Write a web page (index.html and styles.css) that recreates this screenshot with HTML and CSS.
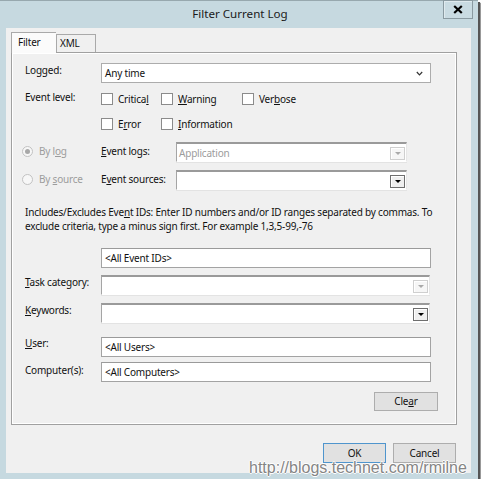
FILE: index.html
```html
<!DOCTYPE html>
<html>
<head>
<meta charset="utf-8">
<link rel="stylesheet" href="styles.css">
</head>
<body>
<div class="window">
  <div class="titlebar">
    <span class="title">Filter Current Log</span>
    <div class="close"><svg width="10" height="9" viewBox="0 0 10 9"><path d="M1.2 1L8.8 8M8.8 1L1.2 8" stroke="#000" stroke-width="2.2" fill="none"/></svg></div>
  </div>
  <div class="client">
    <div class="tabs">
      <div class="tab active">Filter</div>
      <div class="tab">XML</div>
    </div>
    <div class="panel">
      <div class="row r-logged">
        <span class="label">Logged:</span>
        <div class="select"><span class="val">Any time</span><svg class="chev" width="7" height="5" viewBox="0 0 7 5"><path d="M0.8 1L3.5 3.8L6.2 1" stroke="#333" stroke-width="1.2" fill="none"/></svg></div>
      </div>
      <div class="row r-level">
        <span class="label lift">Event level:</span>
        <div class="checks">
          <span class="check"><span class="box"></span><span>Critica<u>l</u></span></span>
          <span class="check"><span class="box"></span><span><u>W</u>arning</span></span>
          <span class="check"><span class="box"></span><span>Ver<u>b</u>ose</span></span>
          <span class="check"><span class="box"></span><span>E<u>r</u>ror</span></span>
          <span class="check"><span class="box"></span><span><u>I</u>nformation</span></span>
        </div>
      </div>
      <div class="row r-bylog">
        <span class="radio-opt"><span class="radio checked"></span><span>By l<u>o</u>g</span></span>
        <span class="label2"><u>E</u>vent logs:</span>
        <div class="combo short disabled"><span class="val">Application</span><span class="drop"><i></i></span></div>
      </div>
      <div class="row r-bysource">
        <span class="radio-opt"><span class="radio"></span><span>By <u>s</u>ource</span></span>
        <span class="label2">E<u>v</u>ent sources:</span>
        <div class="combo short"><span class="val"></span><span class="drop"><i></i></span></div>
      </div>
      <p class="info">Includes/Excludes Eve<u>n</u>t IDs: Enter ID numbers and/or ID ranges separated by commas. To<br>exclude criteria, type a minus sign first. For example 1,3,5-99,-76</p>
      <div class="row r-ids">
        <span class="label"></span>
        <div class="input">&lt;All Event IDs&gt;</div>
      </div>
      <div class="row r-task">
        <span class="label"><u>T</u>ask category:</span>
        <div class="combo long disabled"><span class="val"></span><span class="drop"><i></i></span></div>
      </div>
      <div class="row r-keywords">
        <span class="label"><u>K</u>eywords:</span>
        <div class="combo long"><span class="val"></span><span class="drop"><i></i></span></div>
      </div>
      <div class="row r-user">
        <span class="label"><u>U</u>ser:</span>
        <div class="input">&lt;All Users&gt;</div>
      </div>
      <div class="row r-computer">
        <span class="label">Computer(s):</span>
        <div class="input">&lt;All Computers&gt;</div>
      </div>
      <div class="btn clear">Cle<u>a</u>r</div>
    </div>
    <div class="buttons">
      <div class="btn default">OK</div>
      <div class="btn">Cancel</div>
    </div>
  </div>
</div>
<div class="watermark">http://blogs.technet.com/rmilne</div>
</body>
</html>
```

FILE: styles.css
```css
html, body {
  margin: 0;
  padding: 0;
  background: #ffffff;
}

body {
  font-family: "Noto Sans", "Open Sans", sans-serif;
  font-size: 10px;
  line-height: 14px;
  letter-spacing: -0.2px;
  color: #111;
}

u {
  text-decoration: underline;
  text-underline-offset: 1px;
}

.window {
  position: relative;
  width: 478px;
  height: 479px;
  box-sizing: border-box;
  background: #c6d9e0;
  border-top: 1px solid #97a8ae;
  box-shadow: 2px 2px 0 #555, 3px 3px 1px #999;
}

.titlebar {
  position: relative;
  height: 27px;
  text-align: center;
}

.title {
  display: inline-block;
  font-size: 11.6px;
  letter-spacing: 0;
  line-height: 26px;
  color: #1a1a1a;
  padding-left: 2px;
}

.close {
  position: absolute;
  top: -1px;
  right: 5px;
  width: 30px;
  height: 19px;
  box-sizing: border-box;
  border: 1px solid #8a9aa1;
  box-shadow: inset 1px 1px 0 #dfeaee;
  background: #c9dbe2;
  display: flex;
  align-items: center;
  justify-content: center;
}

.close svg {
  display: block;
}

.client {
  margin: 0 7px 0 6px;
  height: 445px;
  background: #f0f0f0;
  padding: 4px 0 0 5px;
  box-sizing: border-box;
  display: flex;
  flex-direction: column;
}

.tabs {
  display: flex;
  align-items: flex-end;
  height: 20px;
  position: relative;
  z-index: 1;
}

.tab {
  box-sizing: border-box;
  border: 1px solid #a9a9a9;
  border-bottom: none;
  background: #f0f0f0;
  height: 18px;
  line-height: 17px;
  padding-left: 3px;
}

.tab.active {
  width: 45px;
  height: 21px;
  margin-bottom: -1px;
  background: #fbfbfb;
  padding-left: 6px;
  line-height: 19px;
  border-right: none;
}

.tab:not(.active) {
  width: 40px;
  border-left: 1px solid #a9a9a9;
}

.panel {
  width: 446px;
  height: 373px;
  box-sizing: border-box;
  border: 1px solid #a0a0a0;
  box-shadow: inset 1px 1px 0 #ffffff, inset -1px -1px 0 #ffffff;
  padding: 10px 18px 0 13px;
  display: flex;
  flex-direction: column;
}

.row {
  display: flex;
  align-items: flex-start;
}

.label {
  width: 76px;
  flex: none;
  line-height: 14px;
}

.label.lift {
  margin-top: -2px;
}

.select {
  width: 330px;
  height: 20px;
  box-sizing: border-box;
  border: 1px solid #acacac;
  background: #fff;
  display: flex;
  align-items: center;
  justify-content: space-between;
  padding: 0 7px 0 3px;
}

.r-level {
  margin-top: 9px;
}

.checks {
  display: grid;
  grid-template-columns: 60px 81px auto;
  grid-auto-rows: 14px;
  row-gap: 11px;
}

.check {
  display: flex;
  align-items: center;
  gap: 5px;
  white-space: nowrap;
}

.box {
  width: 12px;
  height: 12px;
  box-sizing: border-box;
  border: 1px solid #8b8b8b;
  background: #fff;
  flex: none;
}

.r-bylog {
  margin-top: 11px;
}

.r-bysource {
  margin-top: 8px;
}

.radio-opt {
  width: 79px;
  flex: none;
  display: flex;
  align-items: center;
  gap: 6px;
  margin-left: -3px;
  color: #9c9c9c;
  height: 20px;
  margin-top: -1px;
  box-sizing: border-box;
  white-space: nowrap;
}

.radio {
  width: 11px;
  height: 11px;
  box-sizing: border-box;
  border: 1px solid #c2c2c2;
  border-radius: 50%;
  background: #f7f7f7;
  display: flex;
  align-items: center;
  justify-content: center;
  flex: none;
}

.radio.checked::after {
  content: "";
  width: 5px;
  height: 5px;
  border-radius: 50%;
  background: #a8a8a8;
}

.label2 {
  width: 75px;
  flex: none;
  padding-top: 2px;
}

.combo {
  height: 20px;
  box-sizing: border-box;
  border-style: solid;
  border-width: 2px 1px 1px 1px;
  border-color: #9a9a9a #e6e6e6 #ffffff #a5a5a5;
  box-shadow: 0 1px 0 #e3e3e3;
  background: #fff;
  display: flex;
  align-items: center;
  justify-content: space-between;
  padding: 0 1px 0 2px;
}

.combo.short {
  width: 231px;
}

.combo.long {
  width: 329px;
}

.combo.disabled .val {
  color: #9c9c9c;
}

.drop {
  width: 15px;
  height: 13px;
  box-sizing: border-box;
  border: 1px solid #6e6e6e;
  box-shadow: inset 1px 1px 0 #fff;
  background: #efefef;
  display: flex;
  align-items: center;
  justify-content: center;
  margin-top: 1px;
}

.drop i {
  width: 0;
  height: 0;
  border-left: 3px solid transparent;
  border-right: 3px solid transparent;
  border-top: 3px solid #000;
}

.combo.disabled .drop {
  border-color: #cfcfcf;
  background: #f6f6f6;
}

.combo.disabled .drop i {
  border-top-color: #a9a9a9;
}

.info {
  margin: 15px 0 0 0;
  line-height: 14px;
  white-space: nowrap;
}

.input {
  width: 330px;
  height: 20px;
  box-sizing: border-box;
  border: 1px solid #a3a3a3;
  border-top-color: #9a9a9a;
  background: #fff;
  padding: 0 3px;
  line-height: 18px;
}

.r-ids {
  margin-top: 15px;
}

.r-task {
  margin-top: 7px;
}

.r-keywords {
  margin-top: 8px;
}

.r-user {
  margin-top: 14px;
}

.r-user .label {
  margin-top: -1px;
}

.r-computer {
  margin-top: 5px;
}

.r-computer .label {
  margin-top: 1px;
}

.btn {
  box-sizing: border-box;
  height: 19px;
  border: 1px solid #adadad;
  background: #e1e1e1;
  text-align: center;
  line-height: 17px;
}

.btn.clear {
  width: 64px;
  align-self: flex-end;
  margin-top: 10px;
}

.buttons {
  display: flex;
  justify-content: flex-end;
  gap: 7px;
  margin-top: 18px;
  padding-right: 15px;
}

.buttons .btn {
  height: 20px;
  line-height: 18px;
  width: 63px;
}

.btn.default {
  border-color: #4f95cd;
}

.watermark {
  position: absolute;
  left: 249px;
  top: 459px;
  font-family: "Liberation Sans", Arial, sans-serif;
  font-size: 16px;
  line-height: 18px;
  letter-spacing: 0;
  color: #858585;
  text-shadow: 1px 0 0 #fff, -1px 0 0 #fff, 0 1px 0 #fff, 0 -1px 0 #fff;
  white-space: nowrap;
}
```
